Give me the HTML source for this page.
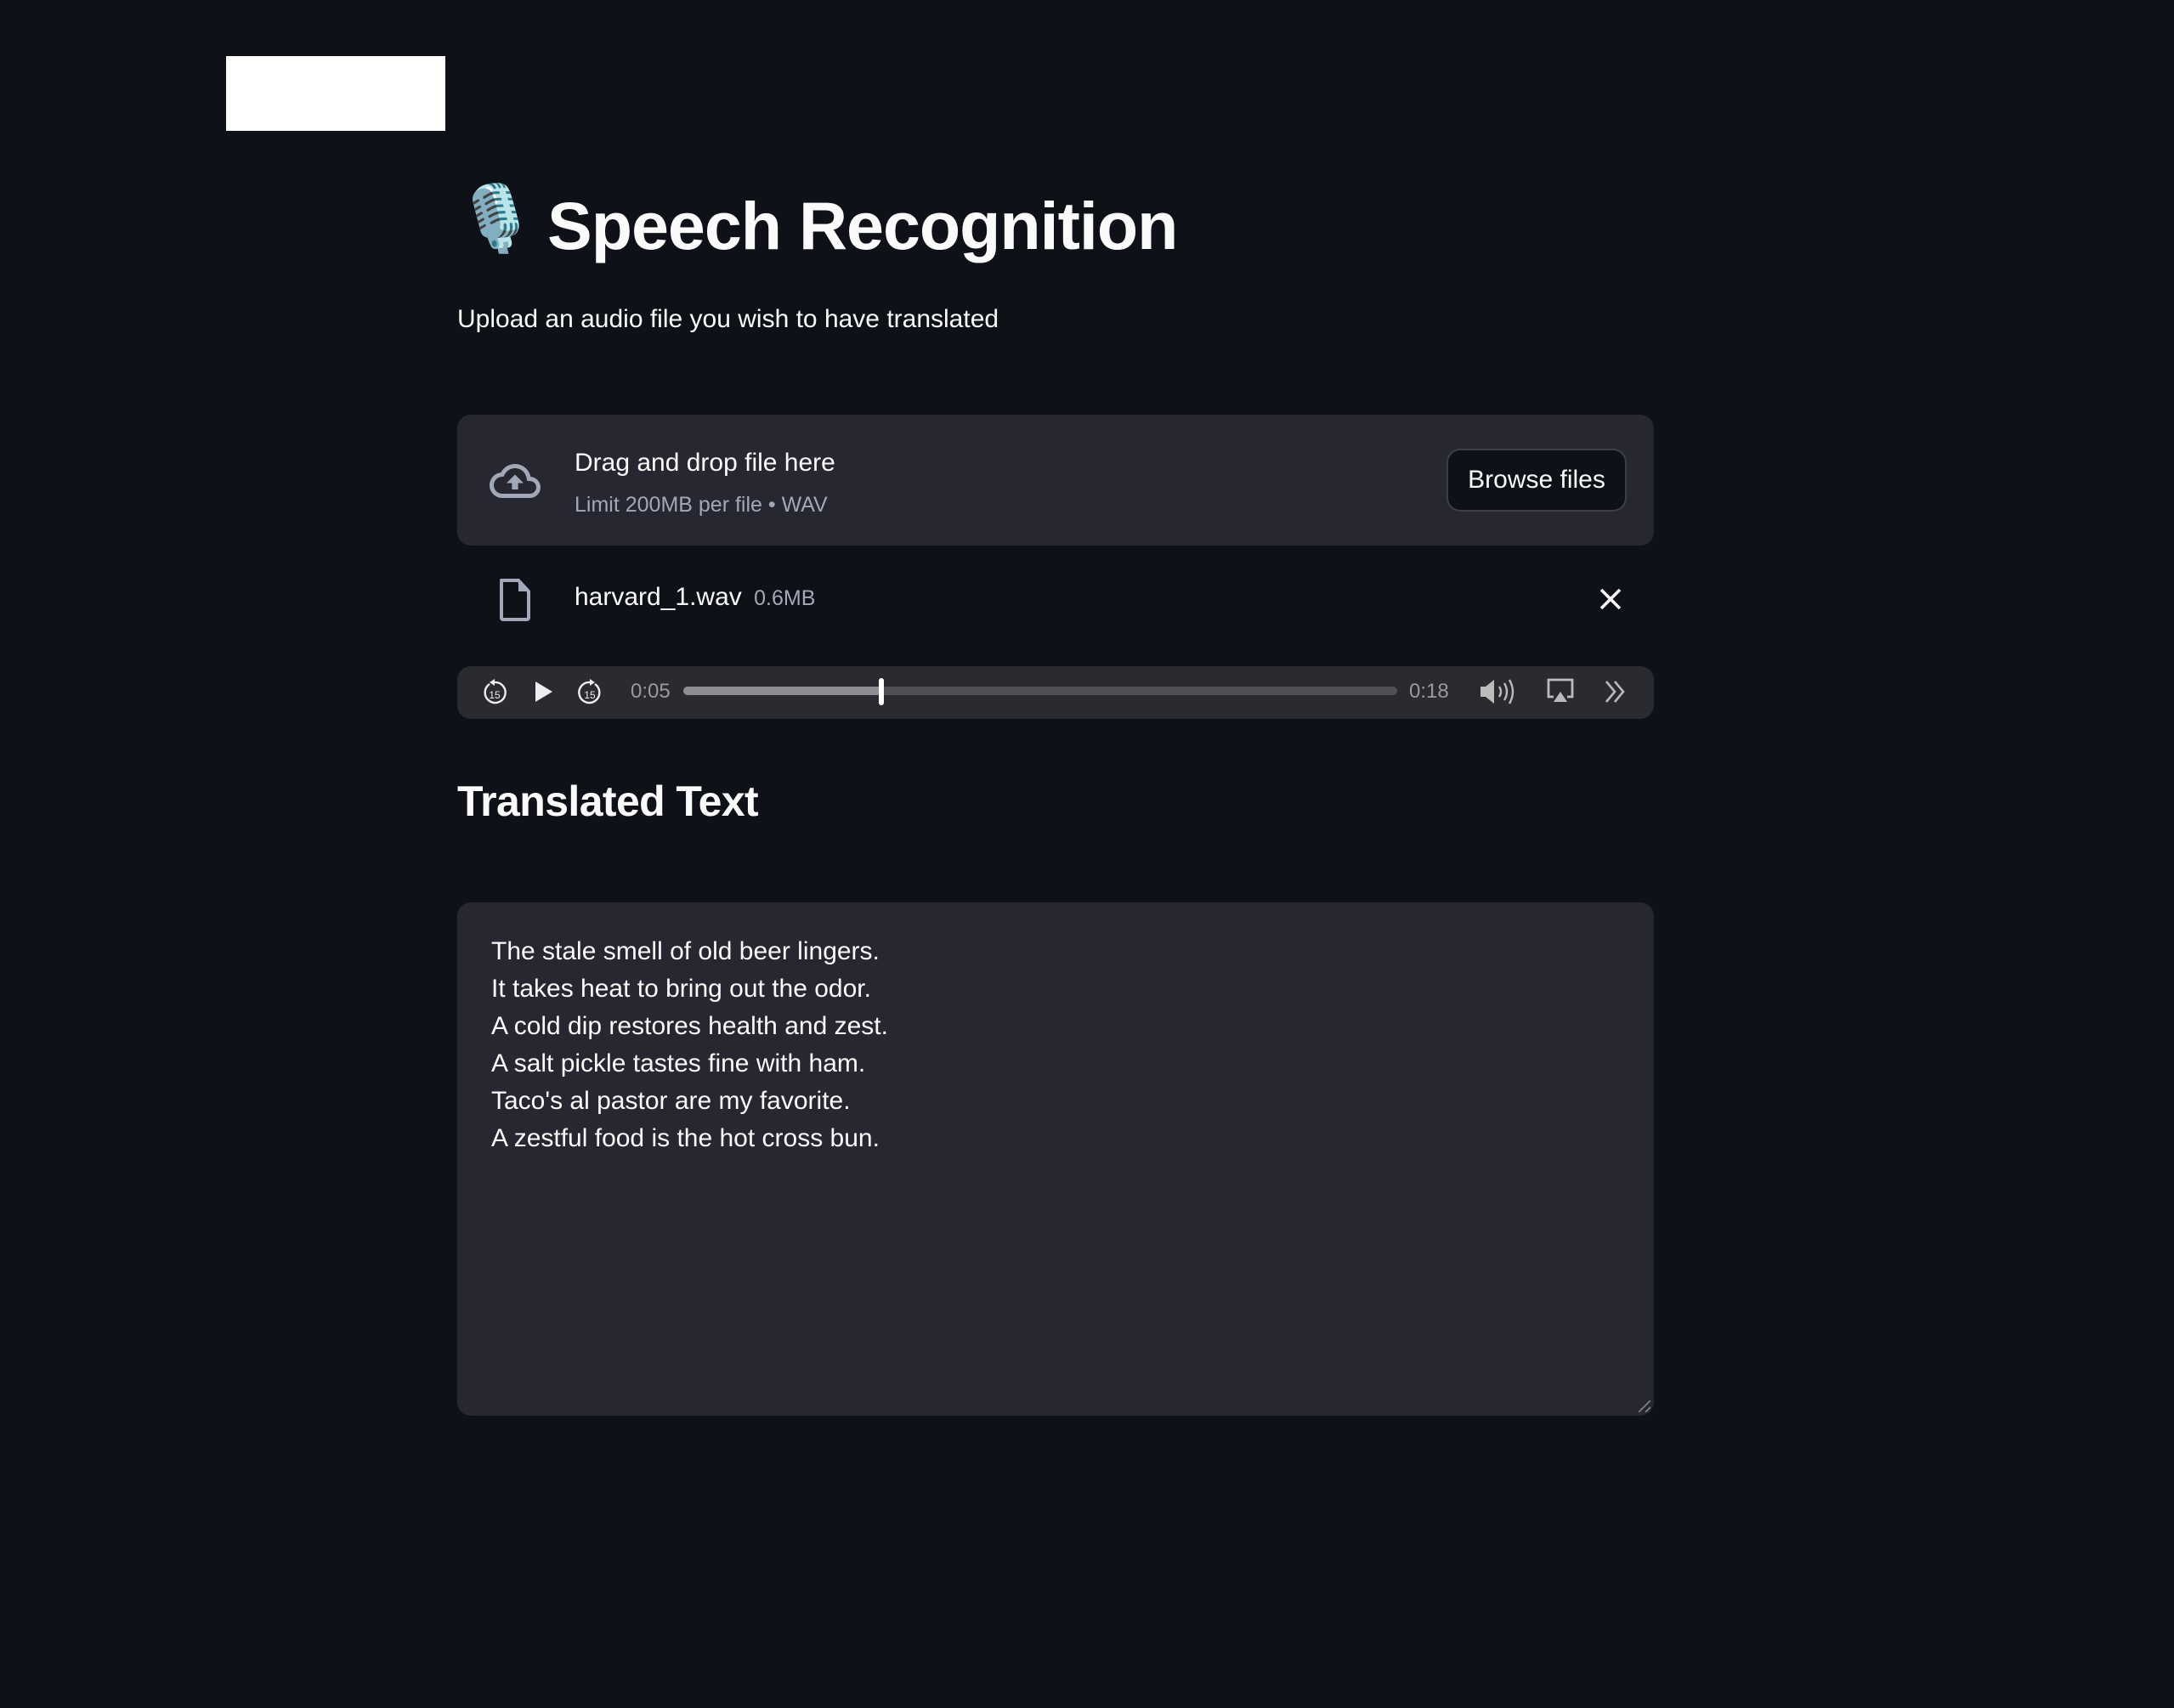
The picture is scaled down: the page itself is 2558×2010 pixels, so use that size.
<!DOCTYPE html>
<html><head><meta charset="utf-8"><style>
html{zoom:2}
body{margin:0;background:#0e1117;width:1279px;height:1005px;overflow:hidden;position:relative;font-family:"Liberation Sans",sans-serif;color:#fafafa}
.a{position:absolute}
</style></head><body>
<div class="a" style="left:133px;top:33px;width:129px;height:44px;background:#fff"></div>
<div class="a" style="left:268px;top:104px;font-size:38px;line-height:50px">🎙️</div>
<div class="a" style="left:322px;top:106px;font-size:39.5px;font-weight:bold;line-height:54px;letter-spacing:-0.5px">Speech Recognition</div>
<div class="a" style="left:269px;top:178px;font-size:15px;line-height:20px">Upload an audio file you wish to have translated</div>

<div class="a" style="left:269px;top:244px;width:704px;height:77px;background:#262730;border-radius:8px"></div>
<svg class="a" style="left:284px;top:268px" width="38" height="30" viewBox="0 0 24 24"><path fill="#a3a8b8" d="M19.35 10.04A7.49 7.49 0 0 0 12 4C9.11 4 6.6 5.640 5.35 8.04A5.994 5.994 0 0 0 0 14c0 3.31 2.69 6 6 6h13c2.76 0 5-2.24 5-5 0-2.640-2.05-4.78-4.65-4.96zM19 18H6c-2.21 0-4-1.79-4-4 0-2.05 1.53-3.76 3.56-3.97l1.07-.11.5-.95A5.469 5.469 0 0 1 12 6c2.62 0 4.88 1.86 5.39 4.43l.3 1.5 1.53.11A2.98 2.98 0 0 1 22 15c0 1.65-1.35 3-3 3zM8 13h2.55v3h2.9v-3H16l-4-4z"/></svg>
<div class="a" style="left:338px;top:264px;font-size:15px">Drag and drop file here</div>
<div class="a" style="left:338px;top:290px;font-size:12.5px;color:#a3a8b8">Limit 200MB per file • WAV</div>
<div class="a" style="left:851px;top:264px;width:106px;height:37px;box-sizing:border-box;background:#0e1117;border:1px solid rgba(250,250,250,.2);border-radius:8px;font-size:15px;line-height:35px;text-align:center">Browse files</div>

<svg class="a" style="left:292px;top:340px" width="22" height="26" viewBox="0 0 22 26"><path fill="none" stroke="#a3a8b8" stroke-width="2" stroke-linejoin="round" d="M3 1.5h10l6 6.5v15.5a1 1 0 0 1-1 1H4a1 1 0 0 1-1-1V2.5a1 1 0 0 1 1-1z"/><path fill="#a3a8b8" d="M13 2v6h6z"/></svg>
<div class="a" style="left:338px;top:343px;font-size:15px">harvard_1.wav <span style="font-size:12.5px;color:#a3a8b8;margin-left:3px">0.6MB</span></div>
<svg class="a" style="left:941px;top:346px" width="13" height="13" viewBox="0 0 13 13"><path stroke="#fafafa" stroke-width="1.8" d="M1 1l11 11M12 1L1 12"/></svg>

<div class="a" style="left:269px;top:392px;width:704px;height:31px;background:#2a2b30;border-radius:8px"></div>
<svg class="a" style="left:283px;top:399px" width="16" height="17" viewBox="0 0 16 17"><path fill="none" stroke="#eee" stroke-width="1.2" d="M5 3.5A6 6 0 1 0 8 2.5"/><path fill="#eee" d="M8 0.5v4l-3-2z"/><text x="8" y="12" font-size="6" text-anchor="middle" fill="#eee" font-family="Liberation Sans">15</text></svg>
<svg class="a" style="left:314px;top:400px" width="12" height="14" viewBox="0 0 12 14"><path fill="#eee" d="M1 1l10 6-10 6z"/></svg>
<svg class="a" style="left:339px;top:399px" width="16" height="17" viewBox="0 0 16 17"><path fill="none" stroke="#eee" stroke-width="1.2" d="M11 3.5A6 6 0 1 1 8 2.5"/><path fill="#eee" d="M8 0.5v4l3-2z"/><text x="8" y="12" font-size="6" text-anchor="middle" fill="#eee" font-family="Liberation Sans">15</text></svg>
<div class="a" style="left:371px;top:400px;font-size:12px;color:#9a9a9e">0:05</div>
<div class="a" style="left:402px;top:404px;width:420px;height:5px;background:#505155;border-radius:3px"></div>
<div class="a" style="left:402px;top:404px;width:117px;height:5px;background:#8e8e92;border-radius:3px"></div>
<div class="a" style="left:517px;top:399px;width:3px;height:16px;background:#fff;border-radius:2px"></div>
<div class="a" style="left:829px;top:400px;font-size:12px;color:#9a9a9e">0:18</div>
<svg class="a" style="left:870px;top:399px" width="24" height="16" viewBox="0 0 24 16"><path fill="#bbb" d="M1 5h3l5-4v14l-5-4H1z"/><path fill="none" stroke="#bbb" stroke-width="1.2" d="M12 5q2 3 0 6M15 3q3 5 0 10M18 1q4 7 0 14"/></svg>
<svg class="a" style="left:909px;top:399px" width="18" height="16" viewBox="0 0 18 16"><path fill="none" stroke="#bbb" stroke-width="1.4" d="M5 11H2V1h14v10h-3"/><path fill="#bbb" d="M9 8l4 6H5z"/></svg>
<svg class="a" style="left:943px;top:400px" width="14" height="14" viewBox="0 0 14 14"><path fill="none" stroke="#bbb" stroke-width="1.3" d="M2 1l5 6-5 6M7 1l5 6-5 6"/></svg>

<div class="a" style="left:269px;top:457px;font-size:25px;font-weight:bold;letter-spacing:-0.3px">Translated Text</div>

<div class="a" style="left:269px;top:531px;width:704px;height:302px;background:#262730;border-radius:8px"></div>
<div class="a" style="left:289px;top:549px;font-size:15px;line-height:22px">The stale smell of old beer lingers.<br>It takes heat to bring out the odor.<br>A cold dip restores health and zest.<br>A salt pickle tastes fine with ham.<br>Taco's al pastor are my favorite.<br>A zestful food is the hot cross bun.</div>
<svg class="a" style="left:964px;top:824px" width="7" height="7" viewBox="0 0 7 7"><path stroke="#888" stroke-width="0.8" d="M0 7L7 0M4 7L7 4"/></svg>
</body></html>
